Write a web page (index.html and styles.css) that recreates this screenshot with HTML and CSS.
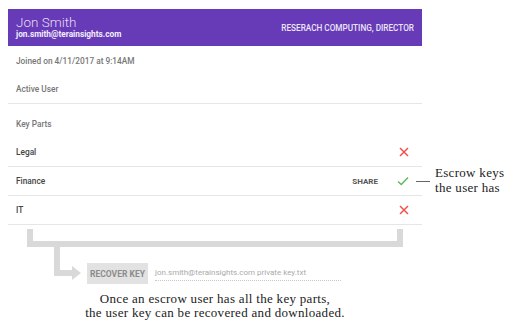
FILE: index.html
```html
<!DOCTYPE html>
<html>
<head>
<meta charset="utf-8">
<link rel="stylesheet" href="styles.css">
</head>
<body>
<div class="card">
  <div class="header">
    <div class="who">
      <div class="name">Jon Smith</div>
      <div class="email">jon.smith@terainsights.com</div>
    </div>
    <div class="title">RESERACH COMPUTING, DIRECTOR</div>
  </div>
  <div class="row meta">Joined on 4/11/2017 at 9:14AM</div>
  <div class="row meta divided">Active User</div>
  <div class="row section">Key Parts</div>
  <div class="row part divided"><span>Legal</span>
    <svg class="icon" width="10" height="10" viewBox="0 0 10 10"><path d="M1 1 L9 9 M9 1 L1 9" stroke="#f0524a" stroke-width="1.5" fill="none"/></svg></div>
  <div class="row part divided"><span>Finance</span>
    <span class="actions"><span class="share">SHARE</span><svg class="icon" width="12" height="10" viewBox="0 0 12 10"><path d="M1 5.5 L4.3 8.6 L11 1.5" fill="none" stroke="#5cb85c" stroke-width="1.4"/></svg></span>
    <div class="note"><span class="note-line"></span><span class="note-text">Escrow keys<br>the user has</span></div>
  </div>
  <div class="row part divided"><span>IT</span>
    <svg class="icon" width="10" height="10" viewBox="0 0 10 10"><path d="M1 1 L9 9 M9 1 L1 9" stroke="#f0524a" stroke-width="1.5" fill="none"/></svg></div>
</div>
<div class="diagram">
  <svg class="bracket" width="430" height="62" viewBox="0 0 430 62">
    <g fill="#d9d9d9">
      <rect x="27" y="4" width="6" height="18"/>
      <rect x="27" y="16" width="376" height="6"/>
      <rect x="397" y="4" width="6" height="18"/>
      <rect x="54" y="22" width="6" height="29"/>
      <rect x="54" y="45" width="19" height="6"/>
      <polygon points="72,41 81,48 72,55"/>
    </g>
  </svg>
  <div class="recover">
    <div class="btn">RECOVER KEY</div>
    <div class="file">jon.smith@terainsights.com private key.txt</div>
  </div>
</div>
<div class="caption">Once an escrow user has all the key parts,<br>the user key can be recovered and downloaded.</div>
</body>
</html>
```
FILE: styles.css
```css
body {
  margin: 0;
  background: #fff;
  font-family: Roboto, "Liberation Sans", sans-serif;
}
.card {
  width: 414px;
  margin: 9px 0 0 8px;
}
.header {
  height: 37px;
  background: #673ab7;
  display: flex;
  align-items: center;
  justify-content: space-between;
  padding: 0 8px;
  box-sizing: border-box;
}
.name {
  font-size: 13.5px;
  font-weight: 300;
  color: #e6def5;
  line-height: 14px;
}
.email {
  font-size: 8.3px;
  font-weight: 700;
  color: #f3eefb;
  line-height: 11px;
}
.title {
  font-size: 8.2px;
  font-weight: 500;
  color: #ece6f7;
}
.row {
  position: relative;
  display: flex;
  align-items: center;
  justify-content: space-between;
  height: 29px;
  padding: 0 8px;
  box-sizing: border-box;
  font-size: 8.3px;
  font-weight: 500;
}
.divided {
  border-bottom: 1px solid #e6e6e6;
}
.meta {
  color: #777;
}
.section {
  height: 34px;
  padding-top: 6px;
  color: #777;
}
.part {
  color: #444;
}
.icon {
  display: block;
  margin-right: 5px;
}
.actions {
  display: flex;
  align-items: center;
  gap: 19px;
}
.share {
  font-size: 8px;
  font-weight: 700;
  color: #555;
}
.note {
  position: absolute;
  left: 408px;
  top: 0;
  height: 100%;
  display: flex;
  align-items: center;
  gap: 5px;
  white-space: nowrap;
}
.note-line {
  width: 14px;
  height: 1px;
  background: #666;
}
.note-text {
  font-family: "Liberation Serif", serif;
  font-size: 13px;
  letter-spacing: 0.3px;
  line-height: 15px;
  color: #222;
  font-weight: 400;
  margin-top: -3px;
}
.diagram {
  position: relative;
  height: 62px;
}
.bracket {
  position: absolute;
  left: 0;
  top: 0;
}
.recover {
  position: relative;
  display: flex;
  align-items: center;
  gap: 7px;
  padding: 38px 0 0 87px;
}
.btn {
  width: 61px;
  height: 21px;
  background: #e2e2e2;
  color: #8c8c8c;
  font-size: 8.5px;
  font-weight: 700;
  display: flex;
  align-items: center;
  justify-content: center;
}
.file {
  width: 186px;
  font-size: 8px;
  color: #aaa;
  padding-top: 2px;
  padding-bottom: 3px;
  border-bottom: 1px dotted #c8c8c8;
}
.caption {
  width: 430px;
  text-align: center;
  font-family: "Liberation Serif", serif;
  font-size: 13px;
  letter-spacing: 0.3px;
  line-height: 14px;
  color: #222;
  margin-top: 5px;
}
```
